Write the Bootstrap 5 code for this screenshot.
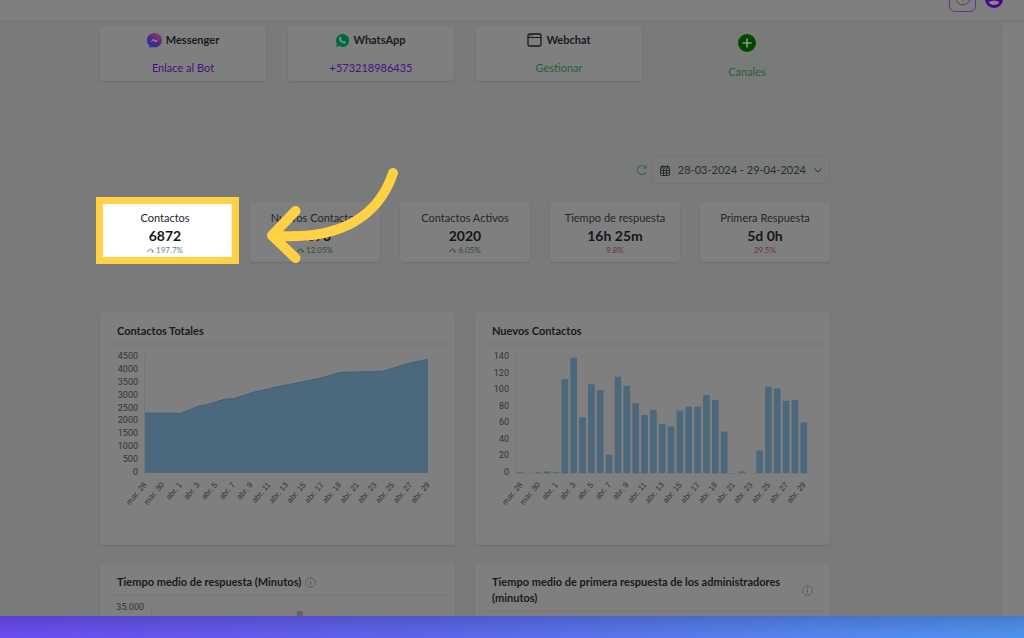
<!DOCTYPE html>
<html lang="es">
<head>
<meta charset="utf-8">
<meta name="viewport" content="width=device-width, initial-scale=1">
<title>Panel de contactos</title>
<link href="https://cdn.jsdelivr.net/npm/bootstrap@5.3.0/dist/css/bootstrap.min.css" rel="stylesheet">
<style>
  body { font-family: Lato, Roboto, sans-serif; font-size: 11px; line-height: 16px; color: #181a1e; background: #7f7f7f; }
  svg { display: block; flex-shrink: 0; }
  .topbar { height: 21px; padding: 0 20px 8px; background: #7f7f7f; border-bottom: 1px solid #747575; box-shadow: 0 1px 2px #70737280; z-index: 2; }
  .help-btn { width: 27px; height: 28px; border: 1px solid #6c2f8c; border-radius: 6px; color: #4b4b4b; background: none; }
  .user-btn { color: #4b0096; background: none; margin-bottom: 3px; }
  .canvas { background: #797b7a; padding: 5px 173px 0 100px; }
  .side-strip { width: 21px; background: #7f7f7f; flex-shrink: 0; }
  .grid { display: grid; }
  .channels { grid-template-columns: repeat(4, 1fr); gap: 22px; margin-bottom: 75px; }
  .stats { grid-template-columns: repeat(5, 1fr); gap: 20px; margin: 18px 0 50px; }
  .charts { grid-template-columns: repeat(2, 1fr); gap: 18px 20px; }
  .tile { background: #7f7f7f; border-radius: 4px; box-shadow: 0 1px 2px #6c6e6d; }
  .channel { height: 55px; padding-top: 6px; font-weight: 700; }
  .channel a, .add a { text-decoration: none; font-weight: 400; }
  .violet { color: #451080; }
  .leaf { color: #285f3c; }
  .range-btn { height: 28px; padding: 0 7px; border: 1px solid #737574; background: none; color: #292c2e; font-size: 11px; }
  .stat { height: 60px; padding-top: 8px; color: #24272a; }
  .stat strong { display: block; font-size: 14px; line-height: 20px; font-weight: 700; color: #141619; }
  .delta { font-size: 8px; line-height: 8px; color: #2c4c3d; }
  .delta.down { color: #6d3434; }
  .focus-tile { background: #fff; box-shadow: none; position: relative; z-index: 1; }
  .focus-tile .delta { color: #5d8b71; }
  .frame { position: absolute; inset: -5px -9px -2px -4px; background: #f1f4f3; }
  .frame-line { position: absolute; inset: -5px -9px -2px -4px; border: 7px solid #ffd145; z-index: 2; }
  .arrow { position: absolute; left: 166px; top: -36px; z-index: 3; }
  .chart-card { padding: 0 7px; }
  .chart-card h2 { font-size: 11px; line-height: 16px; font-weight: 700; margin: 0; padding: 11px 10px 4px; border-bottom: 2px solid #797b7a; }
  .chart-card svg.plot { width: 100%; height: auto; overflow: visible; }
  .plot text { font-family: Roboto, sans-serif; font-size: 9px; fill: #333; }
  .plot .xlab text { font-size: 8px; font-family: "Liberation Sans", sans-serif; }
  .series { fill: #4c687c; }
  .info { color: #565656; }
  .bottom-band { height: 22px; flex-shrink: 0; background: linear-gradient(#00000026, transparent 90%), linear-gradient(90deg, #6b4cf0, #5c66ea 42%, #5584ee 78%, #5093ef); }
</style>
</head>
<body class="vh-100 d-flex flex-column overflow-hidden">
<header class="topbar d-flex justify-content-end align-items-end flex-shrink-0 gap-2">
  <button class="help-btn d-flex align-items-center justify-content-center p-0" aria-label="Ayuda">
    <svg width="16" height="16" viewBox="0 0 16 16" fill="none" stroke="currentColor"><circle cx="8" cy="8" r="7"/><path d="M8 4v5M8 10.500v1"/></svg>
  </button>
  <button class="user-btn border-0 p-0" aria-label="Perfil">
    <svg width="20" height="20" viewBox="0 0 20 20"><circle cx="10" cy="10" r="9" fill="currentColor"/><circle cx="10" cy="7" r="3" fill="#858585"/><path d="M4.500 13q5.500-3 11 0q-1.500 3-5.500 3t-5.500-3" fill="#858585"/></svg>
  </button>
</header>

<div class="d-flex flex-grow-1 overflow-hidden">
<main class="canvas flex-grow-1">
  <section class="grid channels text-center">
    <div class="tile channel">
      <div class="d-flex justify-content-center align-items-center gap-1 mb-2 pb-1">
        <svg width="15" height="15" viewBox="0 0 16 16"><defs><linearGradient id="ms" x1=".1" y1="1" x2=".8" y2="0"><stop stop-color="#193c9e"/><stop offset=".5" stop-color="#50258e"/><stop offset="1" stop-color="#914050"/></linearGradient></defs><path fill="url(#ms)" d="M8 0C3.500 0 0 3.300 0 7.700c0 2.300 1 4.300 2.600 5.700V16l2.500-1.100c.9.300 1.900.4 2.900.4 4.500 0 8-3.200 8-7.600S12.500 0 8 0"/><path d="m3.500 10 3-4 3 2 3-2-3 4-3-2z" fill="#8b8b8b"/></svg>
        <span>Messenger</span>
      </div>
      <a href="#" class="violet">Enlace al Bot</a>
    </div>
    <div class="tile channel">
      <div class="d-flex justify-content-center align-items-center gap-1 mb-2 pb-1">
        <svg width="13" height="13" viewBox="0 0 16 16"><path fill="#00693c" d="M8 0a8 8 0 0 0-6.900 12L0 16l4.200-1.100A8 8 0 1 0 8 0"/><path fill="#8d8d8d" d="M5 3.700c.5-.3 1-.2 1.200.3l.6 1.400c.2.500-.5 1-.6 1.300.7 1.300 1.700 2.200 3 2.800.4-.2.800-1 1.200-.8l1.600.8c.5.300-.1 1.700-.7 2-1.200.6-3 0-4.600-1.200C5 9 3.800 7.200 3.800 5.700c0-.8.500-1.600 1.200-2"/></svg>
        <span>WhatsApp</span>
      </div>
      <a href="#" class="violet">+573218986435</a>
    </div>
    <div class="tile channel">
      <div class="d-flex justify-content-center align-items-center gap-1 mb-2 pb-1">
        <svg width="15" height="14" viewBox="0 0 15 14" fill="none" stroke="#17191c"><rect x="1" y="1" width="13" height="12" rx="1.500" stroke-width="1.300"/><path d="M1 4.500h13M2.500 2.800h1M4.500 2.800h1"/></svg>
        <span>Webchat</span>
      </div>
      <a href="#" class="leaf">Gestionar</a>
    </div>
    <div class="add pt-2">
      <a href="#" class="leaf d-flex flex-column align-items-center gap-2">
        <svg width="18" height="18" viewBox="0 0 18 18" class="mb-1"><circle cx="9" cy="9" r="9" fill="#004700"/><path d="M9 4.500v9M4.500 9h9" stroke="#8a9a8a" stroke-width="1.600"/></svg>
        <span>Canales</span>
      </a>
    </div>
  </section>

  <div class="d-flex justify-content-end align-items-center gap-1">
    <svg width="12" height="12" viewBox="0 0 12 12" fill="none" stroke="#3c6650" stroke-width="1.200"><path d="M9.800 8.200A4.500 4.500 0 1 1 9.600 3.500"/><path d="M10.500 1v3.200H7.300" stroke-width="1"/></svg>
    <button class="range-btn d-flex align-items-center" aria-haspopup="true">
      <svg width="10" height="11" viewBox="0 0 10 11" fill="none" stroke="currentColor" class="me-2"><rect x=".5" y="1.500" width="9" height="9" rx="1"/><path d="M.5 3h9M.5 5.500h9M.5 8h9M3.500 4v6.500M6.500 4v6.500M2.500 0v3M7.500 0v3"/></svg>
      <span>28-03-2024 - 29-04-2024</span>
      <svg width="8" height="5" viewBox="0 0 8 5" fill="none" stroke="currentColor" class="ms-2"><path d="m.5.500 3.500 3.500 3.500-3.500"/></svg>
    </button>
  </div>

  <section class="grid stats text-center position-relative">
    <div class="position-relative">
      <div class="frame"></div>
      <div class="tile stat focus-tile">Contactos<strong>6872</strong><div class="delta"><svg class="d-inline" width="7" height="6" viewBox="0 0 7 6" fill="none" stroke="currentColor"><path d="M1 4 .8 3 3.500 1 6.200 3 6 4H4.500"/></svg> 197.7%</div></div>
      <div class="frame-line"></div>
    </div>
    <div class="tile stat">Nuevos Contactos<strong>2073</strong><div class="delta"><svg class="d-inline" width="7" height="6" viewBox="0 0 7 6" fill="none" stroke="currentColor"><path d="M1 4 .8 3 3.500 1 6.200 3 6 4H4.500"/></svg> 12.05%</div></div>
    <div class="tile stat">Contactos Activos<strong>2020</strong><div class="delta"><svg class="d-inline" width="7" height="6" viewBox="0 0 7 6" fill="none" stroke="currentColor"><path d="M1 4 .8 3 3.500 1 6.200 3 6 4H4.500"/></svg> 6.05%</div></div>
    <div class="tile stat">Tiempo de respuesta<strong>16h 25m</strong><div class="delta down">9.8%</div></div>
    <div class="tile stat">Primera Respuesta<strong>5d 0h</strong><div class="delta down">29.5%</div></div>
    <svg class="arrow" width="136" height="100" viewBox="266 166 136 100" fill="none" stroke="#ffd145" stroke-width="10" stroke-linecap="round" stroke-linejoin="round" aria-hidden="true"><path d="M393 173C379 215 342 241 272 235.500M295.500 211 272 235.500l23.500 22.500"/></svg>
  </section>

  <section class="grid charts">
    <article class="tile chart-card">
      <h2>Contactos Totales</h2>
      <svg class="plot" id="total" viewBox="107 345 341 200" role="img" aria-label="Contactos Totales">
        <path d="M144.500 356V473" stroke="#757776"/>
        <path class="series" d="M145 473V413.300H180.700L198.300 406.300 206.700 404.700 224.300 399.300 234 398.700 251.700 392.700 276.700 387 296.700 383 320 378.300 338 373Q345 372 352 372L373 371.800 384 371 403 365 416 361.700 428 359.300V473z"/>
        <path d="M145 413.300H180.700L198.300 406.300 206.700 404.700 224.300 399.300 234 398.700 251.700 392.700 276.700 387 296.700 383 320 378.300 338 373Q345 372 352 372L373 371.800 384 371 403 365 416 361.700 428 359.300" fill="none" stroke="#3b6280"/>
      </svg>
    </article>
    <article class="tile chart-card">
      <h2>Nuevos Contactos</h2>
      <svg class="plot" id="nuevos" viewBox="482 345 341 200" role="img" aria-label="Nuevos Contactos">
        <path d="M516.500 356V473.500H807" fill="none" stroke="#757776"/>
      </svg>
    </article>
    <article class="tile chart-card">
      <h2 class="d-flex align-items-center gap-1">Tiempo medio de respuesta (Minutos)
        <svg class="info" width="11" height="11" viewBox="0 0 11 11" fill="none" stroke="currentColor"><circle cx="5.500" cy="5.500" r="4.800" stroke-width=".8"/><path d="M5.500 2.500v1M5.500 4.500V8"/></svg>
      </h2>
      <svg class="plot" viewBox="107 597 341 200" role="img" aria-label="Tiempo medio de respuesta">
        <text x="144" y="611" text-anchor="end">35.000</text>
        <path d="M151.500 607V720" stroke="#757776"/>
        <path d="M297 612h3v108h-3z" fill="#4c687c"/><path d="M300 612h3v108h-3z" fill="#805a5c"/>
      </svg>
    </article>
    <article class="tile chart-card">
      <h2 class="d-flex align-items-center justify-content-between"><span>Tiempo medio de primera respuesta de los administradores<br>(minutos)</span>
        <svg class="info" width="11" height="11" viewBox="0 0 11 11" fill="none" stroke="currentColor"><circle cx="5.500" cy="5.500" r="4.800" stroke-width=".8"/><path d="M5.500 2.500v1M5.500 4.500V8"/></svg>
      </h2>
    </article>
  </section>
</main>
<aside class="side-strip"></aside>
</div>
<footer class="bottom-band"></footer>

<script>
  const NS = 'http://www.w3.org/2000/svg';
  function add(parent, tag, attrs, text) {
    const el = document.createElementNS(NS, tag);
    for (const k in attrs) el.setAttribute(k, attrs[k]);
    if (text !== undefined) el.textContent = text;
    return parent.appendChild(el);
  }
  const dates = ['mar. 28', 'mar. 30'];
  for (let d = 1; d < 30; d += 2) dates.push('abr. ' + d);

  function axes(svg, right, max, step, x0, pitch) {
    for (let v = 0; v <= max; v += step)
      add(svg, 'text', { x: right, y: 475 - v / max * 116, 'text-anchor': 'end' }, v);
    const g = add(svg, 'g', { class: 'xlab' });
    dates.forEach((t, i) => {
      const x = x0 + i * pitch;
      add(g, 'text', { x: x, y: 485, 'text-anchor': 'end', transform: `rotate(-50 ${x} 485)` }, t);
    });
  }
  axes(document.getElementById('total'), 138, 4500, 500, 147, 17.7);
  const bars = document.getElementById('nuevos');
  axes(bars, 509, 140, 20, 523, 17.7);
  [1,0,1,2,1,113,139,67,107,100,22,116,105,84,70,76,59,56,75,80,80,94,88,50,0,2,0,27,104,102,87,88,61]
    .forEach((v, i) => add(bars, 'rect', { class: 'series', x: 517.3 + i * 8.85, width: 6.6, y: 473 - v * 0.83, height: v * 0.83 }));
</script>
<script src="https://cdn.jsdelivr.net/npm/bootstrap@5.3.0/dist/js/bootstrap.bundle.min.js"></script>
</body>
</html>
